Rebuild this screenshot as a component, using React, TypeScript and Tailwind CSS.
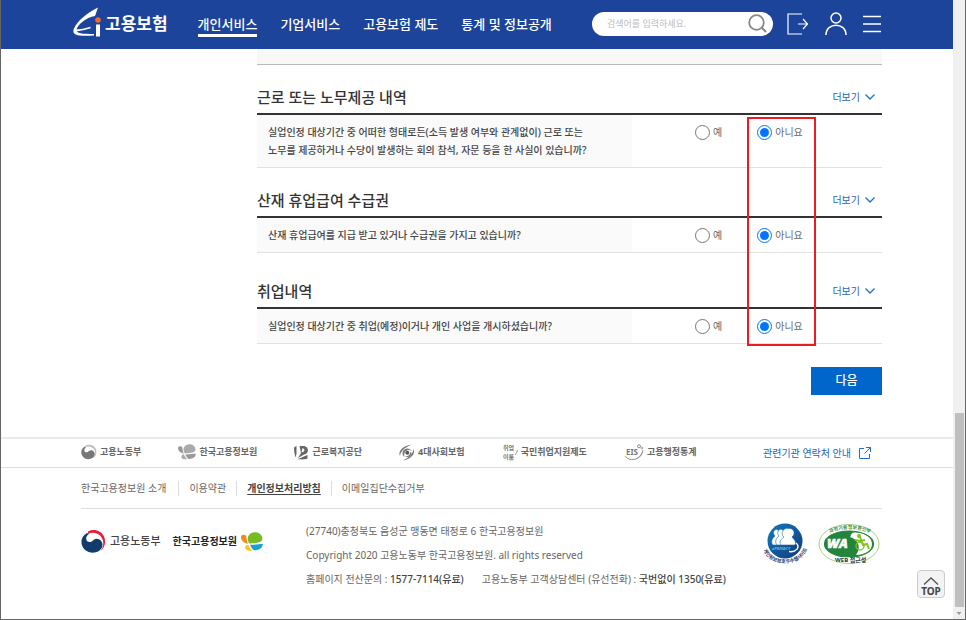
import { useState } from 'react';
import type { ReactNode } from 'react';

interface Question {
  id: string;
  title: string;
  lines: string[];
  className?: string;
}

const menus = ['개인서비스', '기업서비스', '고용보험 제도', '통계 및 정보공개'];

const questions: Question[] = [
  {
    id: 'work',
    title: '근로 또는 노무제공 내역',
    lines: [
      '실업인정 대상기간 중 어떠한 형태로든(소득 발생 여부와 관계없이) 근로 또는',
      '노무를 제공하거나 수당이 발생하는 회의 참석, 자문 등을 한 사실이 있습니까?',
    ],
  },
  {
    id: 'accident',
    title: '산재 휴업급여 수급권',
    lines: ['산재 휴업급여를 지급 받고 있거나 수급권을 가지고 있습니까?'],
  },
  {
    id: 'job',
    title: '취업내역',
    lines: ['실업인정 대상기간 중 취업(예정)이거나 개인 사업을 개시하셨습니까?'],
    className: 'mt-1.5',
  },
];

function EiLogo() {
  return (
    <svg width="28" height="30" viewBox="0 0 28 30" aria-hidden="true">
      <path
        d="M25 .5C15 5 4 14 1 21.500C-1.500 28 3 29.500 21 28.500V27C9 27 3.500 26.500 3.500 23C4 18 13 10.500 22 9Z"
        fill="#fff"
      />
      <path d="M3 23.500Q10 23 17.500 20.500" fill="none" stroke="#fff" strokeWidth="1.800" />
      <path d="M23 17.500H27V29.500H23Z" fill="#fff" />
      <circle cx="25" cy="13" r="2.800" fill="#f26a2a" />
    </svg>
  );
}

function Taegeuk({ size, body, arc }: { size: number; body: string; arc: string }) {
  return (
    <svg width={size} height={size} viewBox="0 0 25 24" className="shrink-0" aria-hidden="true">
      <path
        d="M6 3.500C1 6-1 12 1.500 17C4.500 23 12 25 18 21.500C21.500 19 22.500 15 20.500 12C18.500 9 15 8.500 12.500 10.500C9.500 14 5.500 12.500 5.200 9.500C5 7 6.500 5.500 8 4.500Z"
        fill={body}
      />
      <path
        d="M7 2C13-1 20 1 23 7C25.500 12.500 23.500 18.500 19.500 21.500C23.500 16 23 10 19 6C15.500 3 11 2.500 7 4.500Z"
        fill={arc}
      />
    </svg>
  );
}

function Keis({ width, colors }: { width: number; colors: string[] }) {
  return (
    <svg width={width} viewBox="0 0 22 19" className="shrink-0" aria-hidden="true">
      <path d="M8.500 11.500C5.500 8 6 2 12 .5C17-.5 20.500 2 21.300 6C21.800 9.500 19 11 8.500 11.500Z" fill={colors[0]} />
      <path d="M7 11.800C3 11 0 8.500 0 5C.2 2.500 3.500 2 5.300 4C5.500 7 6 9.200 7 11.800Z" fill={colors[1]} />
      <path d="M7.300 12.500C4.500 13 3.500 15 4.500 17C6.500 19 10.500 19 11.500 18.500C9.500 17 8 15 7.300 12.500Z" fill={colors[2]} />
      <path d="M9 12.800C13 13 18 12 21.800 12C21.500 16 18.500 18.500 13 18.300C11 17 9.800 15 9 12.800Z" fill={colors[3]} />
    </svg>
  );
}

function ComwelIcon() {
  return (
    <svg width="15" height="15" viewBox="0 0 15 15" fill="#666" aria-hidden="true">
      <path d="M0 2.500L2.500 1V9L1.500 12.500C.5 9 0 6 0 2.500Z" />
      <path fillRule="evenodd" d="M5.500 1H10C15 1.500 15.500 8.500 10 9.500L4 13L7 8ZM8.500 3L7.500 7.500C11 7 11.500 4 8.500 3Z" />
      <path d="M3 14.500L11 11L13.500 10V13.500C10 15 6 14 3 14.500Z" />
    </svg>
  );
}

function InsuranceIcon() {
  return (
    <svg width="16" height="17" viewBox="0 0 16 17" fill="#777" aria-hidden="true">
      <path d="M12.500 .5C5 1.500-1.500 6.500 1 12C1.500 8 4 4.500 12.500 .5Z" />
      <path d="M4 16.500C11 15.500 17 10.500 14.500 5C14 9 12 12.500 4 16.500Z" />
      <path d="M4 7C6 3.500 10.500 3.500 13 7C10 5.500 7 5.500 5.500 9C5 10 5 12 6 13C3.500 12 3 9.500 4 7Z" />
      <path d="M12.500 10C10.500 13.500 8 13.500 6 12.500C9 12.500 11 11 11.500 8C12.500 8 12.800 9 12.500 10Z" />
      <circle cx="8.300" cy="8.800" r="2" fill="#555" />
    </svg>
  );
}

function SupportIcon() {
  return (
    <svg width="16" height="18" viewBox="0 0 16 18" fill="#777" aria-hidden="true">
      <text x="1" y="7" fontSize="6">취업</text>
      <text x="1" y="16" fontSize="6">이룸</text>
      <path d="M13 12Q15 10 15.500 7" fill="none" stroke="#999" />
    </svg>
  );
}

function EisIcon() {
  return (
    <svg width="20" height="17" viewBox="0 0 20 17" aria-hidden="true">
      <text x="2" y="11" fontSize="8" fontWeight="700" fill="#777">EIS</text>
      <path d="M1 12C5 17.500 16 17 19 6C18.500 15.500 6 19 1 12Z" fill="#777" stroke="#777" strokeWidth=".4" />
      <circle cx="15" cy="2.300" r="1.500" fill="none" stroke="#888" />
      <circle cx="18" cy="4" r="1" fill="none" stroke="#888" strokeWidth=".7" />
    </svg>
  );
}

const partners: { name: string; icon: ReactNode }[] = [
  { name: '고용노동부', icon: <Taegeuk size={16} body="#777" arc="#bbb" /> },
  { name: '한국고용정보원', icon: <Keis width={18} colors={['#aaa', '#999', '#aaa', '#999']} /> },
  { name: '근로복지공단', icon: <ComwelIcon /> },
  { name: '4대사회보험', icon: <InsuranceIcon /> },
  { name: '국민취업지원제도', icon: <SupportIcon /> },
  { name: '고용행정통계', icon: <EisIcon /> },
];

function PrivacyMark() {
  return (
    <svg width="46" height="44" viewBox="0 0 46 44" role="img" aria-label="ePRIVACY">
      <defs>
        <linearGradient id="privacyFill" x1="0" y1="0" x2="1" y2="1">
          <stop offset="0" stopColor="#1279bd" />
          <stop offset="1" stopColor="#123a7c" />
        </linearGradient>
        <path id="privacyArc" d="M1 26C7 45 39 45 45 26" />
      </defs>
      <circle cx="23" cy="18" r="17.500" fill="url(#privacyFill)" />
      <g fill="#fff" stroke="#1c68a8" strokeWidth=".6">
        <path d="M16 7C12 5 10 10 13 13C9 16 9 20 11 22H20V12Z" />
        <path d="M21 7C17 4 14 10 17 13C13 16 13 20 15 22H24V12Z" />
        <path d="M27 5.500C21 4 18 11 22 14C18 17 17 19 19 22H33C35 18 31 16 30 14C34 11 32 5 27 5.500Z" />
      </g>
      <path d="M27 28.500C34 29.500 39 24 34 20" fill="none" stroke="#fff" strokeWidth="1.500" />
      <text x="10" y="27" fontSize="4" fontWeight="700" fontStyle="italic" fill="#5db9ea">ePRIVACY</text>
      <text fontSize="5" fontWeight="700" fill="#17386f">
        <textPath href="#privacyArc" startOffset="1">개인정보보호우수웹사이트</textPath>
      </text>
    </svg>
  );
}

function WebAccessMark() {
  return (
    <svg width="62" height="42" viewBox="0 0 62 42" role="img" aria-label="WEB 접근성">
      <defs>
        <path id="waTop" d="M10 11Q31 1 54 11" />
      </defs>
      <ellipse cx="31" cy="21" rx="30" ry="19.500" fill="#fff" stroke="#a4d37e" />
      <ellipse cx="31" cy="21" rx="24.500" ry="13" fill="#23853b" />
      <path d="M34 10C45 8 54 14 54 21C54 28 47 32 38 32C43 25 41 17 32 14Z" fill="#fff" />
      <ellipse cx="31" cy="21" rx="24.500" ry="13" fill="none" stroke="#23853b" strokeWidth="1.200" />
      <text x="9" y="25" fontSize="13" fontWeight="900" fontStyle="italic" fill="#fff" stroke="#fff" strokeWidth=".5">
        WA
      </text>
      <g fill="none" stroke="#7fc31c" strokeWidth="2">
        <path d="M42 14L45 22L49 21L51 26M37 17L42 18L47 17" />
        <circle cx="42" cy="23" r="4" strokeWidth="1.300" />
        <circle cx="41" cy="13" r="1" />
      </g>
      <text fontSize="5" fontWeight="700" fill="#3c8a45">
        <textPath href="#waTop" startOffset="2">과학기술정보통신부</textPath>
      </text>
      <path d="M17 34.500H45V39H17Z" fill="#fff" />
      <text x="17" y="39" fontSize="6" fontWeight="700" fill="#333">WEB 접근성</text>
    </svg>
  );
}

function Header() {
  return (
    <header className="flex h-[49px] items-center bg-[#1c449b] px-[72px] pb-0.5 text-white">
      <a href="#home" className="flex shrink-0 items-center gap-1 pb-1">
        <EiLogo />
        <span className="mt-1 text-[17px] leading-6 font-bold">고용보험</span>
      </a>
      <nav className="ml-[30px] flex gap-[23px] text-[13px] font-medium whitespace-nowrap">
        {menus.map((menu, i) => (
          <a
            key={menu}
            href="#menu"
            className={
              i === 0
                ? 'border-y-[3px] border-t-transparent border-b-white leading-5'
                : 'border-y-[3px] border-transparent leading-5'
            }
          >
            {menu}
          </a>
        ))}
      </nav>
      <div className="ml-auto flex items-center">
        <form className="flex h-6 w-[181px] items-center rounded-full bg-white pr-1.5 pl-[15px]">
          <input
            type="search"
            aria-label="검색어"
            placeholder="검색어를 입력하세요."
            className="min-w-0 flex-1 text-[9px] text-gray-700 outline-0 placeholder:text-[#bbb]"
          />
          <button type="button" aria-label="검색">
            <svg width="19" height="19" viewBox="0 0 19 19" fill="none" stroke="#888" strokeWidth="1.800">
              <circle cx="8.500" cy="8.500" r="7.300" />
              <path d="M13.500 13.500L18 18" strokeWidth="2.200" />
            </svg>
          </button>
        </form>
        <button type="button" aria-label="로그아웃" className="ml-3.5">
          <svg width="22" height="22" viewBox="0 0 22 22" fill="none" stroke="#fff" strokeWidth="1.200">
            <path d="M15 1H1V21H15M11 11H20M16 6L20.500 11L16 16" />
          </svg>
        </button>
        <button type="button" aria-label="마이페이지" className="ml-4">
          <svg width="22" height="24" viewBox="0 0 22 24" fill="none" stroke="#fff" strokeWidth="1.500">
            <circle cx="11" cy="6" r="5" />
            <path d="M1 23C1 10 21 10 21 23" />
          </svg>
        </button>
        <button type="button" aria-label="전체메뉴" className="ml-4">
          <svg width="18" height="18" viewBox="0 0 18 18" fill="none" stroke="#fff" strokeWidth="1.500">
            <path d="M0 1.500H18M0 9H18M0 16.500H18" />
          </svg>
        </button>
      </div>
    </header>
  );
}

function QuestionSection({ id, title, lines, className }: Question) {
  const [answer, setAnswer] = useState('no');

  return (
    <section className={className}>
      <div className="flex h-12 items-end justify-between pb-[5px]">
        <h2 className="text-[15px] leading-[22px] font-medium text-[#333]">{title}</h2>
        <button type="button" className="mr-[7px] flex items-center gap-[5px] text-[10px] leading-[22px] text-[#2a63b5]">
          더보기
          <svg width="10" height="6" viewBox="0 0 10 6" fill="none" stroke="#1b73cf" strokeWidth="1.300">
            <path d="M.5.500L5 5L9.500.500" />
          </svg>
        </button>
      </div>
      <fieldset
        aria-labelledby={id}
        className="flex border-t-2 border-b border-t-[#333] border-b-[#e2e2e2] text-[10px] leading-[18px]"
      >
        <p id={id} className="w-3/5 bg-[#fafafa] py-2 pl-[11px] font-medium whitespace-nowrap text-[#444]">
          {lines.map((line) => (
            <span key={line} className="block">
              {line}
            </span>
          ))}
        </p>
        <div className="flex items-start gap-[35px] py-2 pl-[63px] text-[#666]">
          <label className="flex items-center gap-[3px]">
            <input
              type="radio"
              name={id}
              checked={answer === 'yes'}
              onChange={() => setAnswer('yes')}
              className="size-[15px]"
            />
            예
          </label>
          <label className="flex items-center gap-[3px]">
            <input
              type="radio"
              name={id}
              checked={answer === 'no'}
              onChange={() => setAnswer('no')}
              className="size-[15px]"
            />
            아니요
          </label>
        </div>
      </fieldset>
    </section>
  );
}

function Footer() {
  return (
    <footer className="text-[10px] text-[#666]">
      <div className="border-t-2 border-b border-t-[#ebebeb] border-b-[#ddd]">
        <div className="flex h-7 items-center justify-between pr-[82px] pl-20 whitespace-nowrap">
          <ul className="flex items-center gap-[37px] pb-0.5 text-[9px] font-bold">
            {partners.map(({ name, icon }) => (
              <li key={name}>
                <a href="#partner" className="flex items-center gap-[3px]">
                  {icon}
                  {name}
                </a>
              </li>
            ))}
          </ul>
          <a href="#contacts" className="flex items-center gap-2 text-[#1b5fc0]">
            관련기관 연락처 안내
            <svg width="12" height="12" viewBox="0 0 12 12" fill="none" stroke="#1b73cf">
              <path d="M5 1.500H.5V11.500H10.500V7M7 .5H11.500V5M11.500.500L5.500 6.500" />
            </svg>
          </a>
        </div>
      </div>
      <div className="mr-[71px] ml-20">
        <nav className="flex h-[41px] items-center border-b border-[#ddd] whitespace-nowrap">
          <a href="#about" className="pr-3">한국고용정보원 소개</a>
          <a href="#terms" className="border-l border-[#ddd] px-[10px]">이용약관</a>
          <a href="#privacy" className="border-l border-[#ddd] px-[10px] font-bold text-[#444] underline underline-offset-2">
            개인정보처리방침
          </a>
          <a href="#email" className="border-l border-[#ddd] pl-[10px]">이메일집단수집거부</a>
        </nav>
        <div className="flex items-start whitespace-nowrap">
          <div className="mt-5 flex items-center">
            <Taegeuk size={25} body="#123a6b" arc="#e0203c" />
            <span className="ml-1 text-[11px] font-medium text-[#444]">고용노동부</span>
            <span className="mr-1 ml-3 text-[10px] font-bold text-[#222]">한국고용정보원</span>
            <Keis width={22} colors={['#76bc21', '#f08a1d', '#fcc419', '#1b9dd9']} />
          </div>
          <address className="ml-[43px] pt-[10px] text-[10px] leading-6 not-italic">
            <p>(27740)충청북도 음성군 맹동면 태정로 6 한국고용정보원</p>
            <p>Copyright 2020 고용노동부 한국고용정보원. all rights reserved</p>
            <p className="flex gap-[18px]">
              <span>
                홈페이지 전산문의 : <b className="font-medium text-[#444]">1577-7114(유료)</b>
              </span>
              <span>
                고용노동부 고객상담센터 (유선전화) : <b className="font-medium text-[#444]">국번없이 1350(유료)</b>
              </span>
            </p>
          </address>
          <div className="mt-[14px] mr-0.5 ml-auto flex gap-2.5">
            <PrivacyMark />
            <WebAccessMark />
          </div>
        </div>
      </div>
    </footer>
  );
}

export default function App() {
  return (
    <div className="flex min-h-screen border-x border-b border-[#666] bg-white font-['Noto_Sans','Noto_Sans_CJK_KR',sans-serif]">
      <div className="relative min-w-0 flex-1">
        <Header />
        <main className="mb-[42px] pr-[71px] pl-64">
          <div className="h-4 border-b border-[#bbb] bg-[#f9f8f6]" />
          <div className="relative">
            {questions.map((question) => (
              <QuestionSection key={question.id} {...question} />
            ))}
            <div className="pointer-events-none absolute top-[52px] right-[66px] -bottom-0.5 w-[69px] border-2 border-[#ed1c24]" />
          </div>
          <button
            type="button"
            className="mt-[23px] ml-auto block h-7 w-[71px] bg-[#0066cc] text-xs font-medium text-white"
          >
            다음
          </button>
        </main>
        <Footer />
        <a
          href="#top"
          className="absolute right-2 bottom-[21px] flex size-7 flex-col items-center justify-end rounded-sm border border-[#ccc] bg-[#f3f3f3] text-[10px] leading-3 font-bold text-[#444]"
        >
          <svg width="16" height="8" viewBox="0 0 16 8" fill="none" stroke="#555" strokeWidth="1.300">
            <path d="M1 7.500L8 1L15 7.500" />
          </svg>
          TOP
        </a>
      </div>
      <div className="flex w-3 flex-col items-center justify-end bg-[#f0f0f0]" aria-hidden="true">
        <div className="h-[194px] w-[9px] bg-[#bfbfbf]" />
        <svg width="12" height="12" viewBox="0 0 12 12" fill="#999">
          <path d="M3.500 5H8.500L6 8Z" />
        </svg>
      </div>
    </div>
  );
}
